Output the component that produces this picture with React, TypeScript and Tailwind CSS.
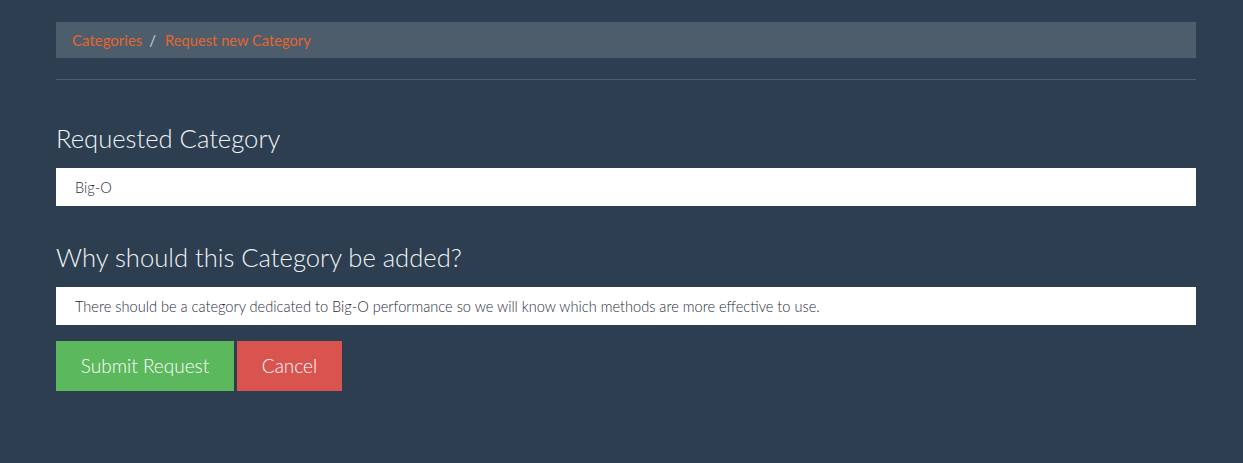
export default function App() {
  return (
    <div
      className="min-h-[463px] w-full bg-[#2c3e50] text-white"
      style={{ fontFamily: "Lato, 'Open Sans', sans-serif" }}
    >
      <div className="ml-[56px] w-[1140px] pt-[22px]">
        {/* Breadcrumb */}
        <nav className="flex h-[36px] items-center bg-[#4e5d6c] px-4 text-[15px]">
          <a href="#" className="text-[#e2662f]">Categories</a>
          <span className="ml-[7px] mr-[9px] text-[#c2d0dc]">/</span>
          <span className="text-[14.7px] text-[#e2662f]">Request new Category</span>
        </nav>
        <hr className="mt-[21px] border-t border-[#4e5d6c]" />

        <form className="flex flex-col">
          <h3 className="mt-[45px] text-[25.6px] font-light leading-[27px] text-[#f0f3f5]">Requested Category</h3>
          <input
            className="mt-[16px] h-[38px] w-full bg-white px-[19px] text-[14.6px] font-light text-[#1f2d3a] outline-none"
            defaultValue="Big-O"
          />
          <h3 className="mt-[38px] text-[25.6px] font-light leading-[27px] text-[#f0f3f5]">Why should this Category be added?</h3>
          <input
            className="mt-[16px] h-[38px] w-full bg-white px-[19px] text-[14.6px] font-light text-[#1f2d3a] outline-none"
            defaultValue="There should be a category dedicated to Big-O performance so we will know which methods are more effective to use."
          />
          <div className="mt-[16px] flex gap-[3px]">
            <button type="button" className="h-[50px] w-[178px] bg-[#5cb85c] text-[19px] font-light text-white">
              Submit Request
            </button>
            <button type="button" className="h-[50px] w-[105px] bg-[#d9534f] text-[19px] font-light text-white">
              Cancel
            </button>
          </div>
        </form>
      </div>
    </div>
  );
}
